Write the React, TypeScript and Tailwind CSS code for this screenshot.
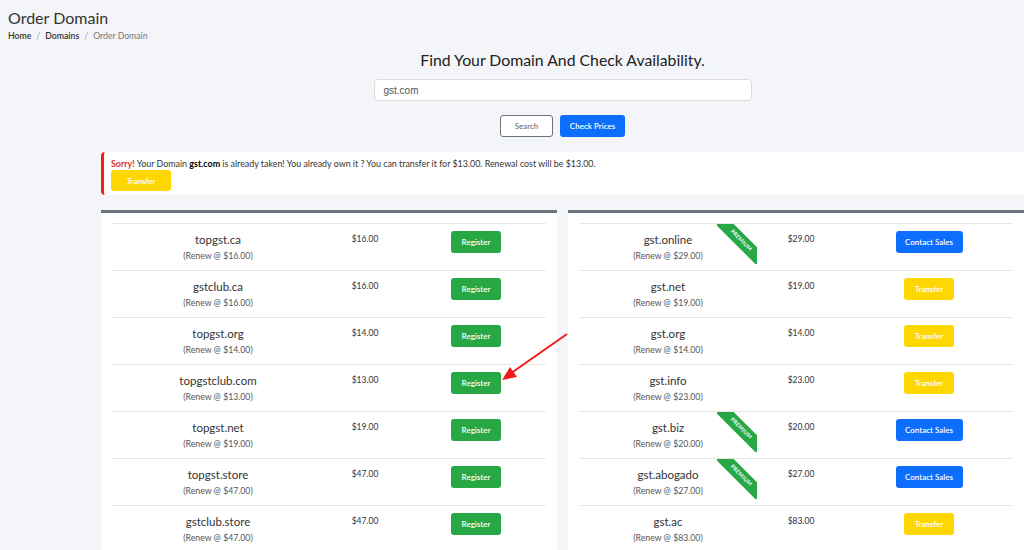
import React from "react";

type Row = { name: string; price: string; action: "register" | "transfer" | "sales"; premium?: boolean };

const left: Row[] = [
  { name: "topgst.ca", price: "$16.00", action: "register" },
  { name: "gstclub.ca", price: "$16.00", action: "register" },
  { name: "topgst.org", price: "$14.00", action: "register" },
  { name: "topgstclub.com", price: "$13.00", action: "register" },
  { name: "topgst.net", price: "$19.00", action: "register" },
  { name: "topgst.store", price: "$47.00", action: "register" },
  { name: "gstclub.store", price: "$47.00", action: "register" },
];

const right: Row[] = [
  { name: "gst.online", price: "$29.00", action: "sales", premium: true },
  { name: "gst.net", price: "$19.00", action: "transfer" },
  { name: "gst.org", price: "$14.00", action: "transfer" },
  { name: "gst.info", price: "$23.00", action: "transfer" },
  { name: "gst.biz", price: "$20.00", action: "sales", premium: true },
  { name: "gst.abogado", price: "$27.00", action: "sales", premium: true },
  { name: "gst.ac", price: "$83.00", action: "transfer" },
];

function ActionButton({ action }: { action: Row["action"] }) {
  if (action === "register")
    return (
      <button className="h-[22px] w-[50px] rounded-[3px] bg-[#28a745] text-[8px] font-semibold text-white">
        Register
      </button>
    );
  if (action === "transfer")
    return (
      <button className="h-[22px] w-[50px] rounded-[3px] bg-[#ffd700] text-[8px] font-semibold text-white">
        Transfer
      </button>
    );
  return (
    <button className="h-[22px] w-[67px] rounded-[3px] bg-[#0d6efd] text-[8px] font-semibold text-white">
      Contact Sales
    </button>
  );
}

function Premium() {
  return (
    <div className="absolute right-0 top-0 h-[40px] w-[40px] overflow-hidden">
      <div className="absolute left-[-11px] top-[10px] flex h-[13px] w-[70px] rotate-45 items-center justify-center bg-[#28a745] text-[5.5px] font-bold tracking-[0.2px] text-white">
        PREMIUM
      </div>
    </div>
  );
}

function Card({ rows, cols }: { rows: Row[]; cols: [string, string, string] }) {
  return (
    <div className="h-[400px] w-[456px] shrink-0 border-t-[3px] border-[#6c757d] bg-white px-[11px] pt-[10px]">
      {rows.map((r) => (
        <div key={r.name} className="flex h-[47px] border-t border-[#e6e6e6]">
          <div className={`relative flex flex-col items-center pt-[8px] ${cols[0]}`}>
            <div className="text-[11.5px] leading-[16px] text-[#333]">{r.name}</div>
            <div className="text-[8.7px] leading-[16px] text-[#555]">(Renew @ {r.price})</div>
            {r.premium && <Premium />}
          </div>
          <div className={`flex justify-center pt-[9px] ${cols[1]}`}>
            <span className="text-[8.5px] leading-[12px] text-[#333]">{r.price}</span>
          </div>
          <div className={`flex justify-center pt-[7px] ${cols[2]}`}>
            <ActionButton action={r.action} />
          </div>
        </div>
      ))}
    </div>
  );
}

export default function App() {
  return (
    <div
      className="relative h-[550px] w-[1024px] overflow-hidden bg-[#f4f5f9]"
      style={{ fontFamily: "Lato, 'Liberation Sans', sans-serif" }}
    >
      <div className="pl-[8px] pt-[7px]">
        <h1 className="text-[16px] leading-[22px] text-[#333]">Order Domain</h1>
        <div className="flex items-center gap-[5px] text-[8.7px] leading-[14px]">
          <span className="font-semibold text-[#333]">Home</span>
          <span className="text-[#999]">/</span>
          <span className="font-semibold text-[#333]">Domains</span>
          <span className="text-[#999]">/</span>
          <span className="text-[#777]">Order Domain</span>
        </div>
      </div>

      <div className="ml-[101px] flex w-[923px] flex-col items-center">
        <h2 className="mt-[6px] text-[15.8px] leading-[22px] text-[#222]">
          Find Your Domain And Check Availability.
        </h2>
        <div
          className="mt-[8px] flex h-[22px] w-[378px] items-center rounded-[4px] border border-[#dcdcdc] bg-white px-[9px] text-[10px] text-[#555]"
          style={{ fontFamily: "'Liberation Sans', Arial, sans-serif" }}
        >
          gst.com
        </div>
        <div className="mt-[14px] flex gap-[7px]">
          <button className="h-[22px] w-[53px] rounded-[3px] border border-[#6c757d] bg-white text-[8px] text-[#666]">
            Search
          </button>
          <button className="h-[22px] w-[65px] rounded-[3px] bg-[#0d6efd] text-[8px] font-semibold text-white">
            Check Prices
          </button>
        </div>

        <div className="mt-[15px] flex h-[43px] w-full flex-col items-start rounded-[4px] border-l-[3px] border-[#ff1a1a] bg-white pl-[7px] pt-[6px]">
          <div className="text-[8.9px] leading-[12px] text-[#333]">
            <span className="font-bold text-[#e03131]">Sorry!</span> Your Domain{" "}
            <span className="font-bold text-black">gst.com</span> is already taken! You already own it ? You can
            transfer it for $13.00. Renewal cost will be $13.00.
          </div>
          <button className="block h-[21px] w-[60px] rounded-[3px] bg-[#ffd700] text-[8px] font-semibold text-white">
            Transfer
          </button>
        </div>

        <div className="mt-[15px] flex w-full gap-[11px]">
          <Card rows={left} cols={["w-[212px]", "w-[82px]", "w-[140px]"]} />
          <Card rows={right} cols={["w-[178px]", "w-[88px]", "w-[168px]"]} />
        </div>
      </div>

      <svg className="absolute left-0 top-0" width="1024" height="550" viewBox="0 0 1024 550">
        <line x1="567" y1="334" x2="512" y2="372.5" stroke="#ee1c1c" strokeWidth="2" />
        <polygon points="502,380 517,377 510,367" fill="#ee1c1c" />
      </svg>
    </div>
  );
}
